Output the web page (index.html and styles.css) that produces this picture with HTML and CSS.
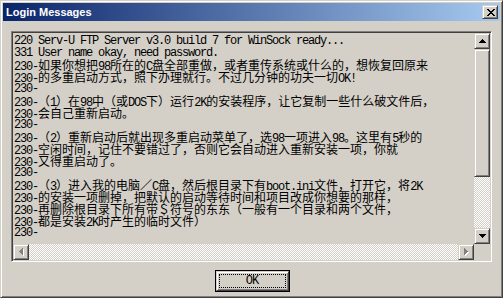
FILE: index.html
```
<!DOCTYPE html>
<html>
<head>
<meta charset="utf-8">
<link rel="stylesheet" href="styles.css">
</head>
<body>
<div class="win">
  <div class="title">
    <span class="title-text">Login Messages</span>
    <div class="close raised">
      <svg width="8" height="7" viewBox="0 0 8 7" shape-rendering="crispEdges">
        <path d="M0 0h2v1H0zM6 0h2v1H6zM1 1h2v1H1zM5 1h2v1H5zM2 2h4v1H2zM3 3h2v1H3zM2 4h4v1H2zM1 5h2v1H1zM5 5h2v1H5zM0 6h2v1H0zM6 6h2v1H6z" fill="#000"/>
      </svg>
    </div>
  </div>
  <div class="content">
    <div class="edit">
      <div class="text">
        <div class="ln">220 Serv-U FTP Server v3.0 build 7 for WinSock ready...</div>
        <div class="ln">331 User name okay, need password.</div>
        <div class="ln">230-<span class="c">如果你想把</span>98<span class="c">所在的</span>C<span class="c">盘全部重做，或者重传系统或什么的，想恢复回原来</span></div>
        <div class="ln">230-<span class="c">的多重启动方式，照下办理就行。不过几分钟的功夫一切</span>OK!</div>
        <div class="ln">230-</div>
        <div class="ln">230-<span class="c">（</span>1<span class="c">）在</span>98<span class="c">中（或</span>DOS<span class="c">下）运行</span>2K<span class="c">的安装程序，让它复制一些什么破文件后，</span></div>
        <div class="ln">230-<span class="c">会自己重新启动。</span></div>
        <div class="ln">230-</div>
        <div class="ln">230-<span class="c">（</span>2<span class="c">）重新启动后就出现多重启动菜单了，选</span>98<span class="c">一项进入</span>98<span class="c">。这里有</span>5<span class="c">秒的</span></div>
        <div class="ln">230-<span class="c">空闲时间，记住不要错过了，否则它会自动进入重新安装一项，你就</span></div>
        <div class="ln">230-<span class="c">又得重启动了。</span></div>
        <div class="ln">230-</div>
        <div class="ln">230-<span class="c">（</span>3<span class="c">）进入我的电脑／</span>C<span class="c">盘，然后根目录下有</span>boot.ini<span class="c">文件，打开它，将</span>2K</div>
        <div class="ln">230-<span class="c">的安装一项删掉，把默认的启动等待时间和项目改成你想要的那样，</span></div>
        <div class="ln">230-<span class="c">再删除根目录下所有带＄符号的东东（一般有一个目录和两个文件，</span></div>
        <div class="ln">230-<span class="c">都是安装</span>2K<span class="c">时产生的临时文件）</span></div>
        <div class="ln">230-</div>
      </div>
      <div class="vscroll">
        <div class="sbtn raised">
          <svg width="7" height="4" viewBox="0 0 7 4" shape-rendering="crispEdges"><path d="M3 0h1v1H3zM2 1h3v1H2zM1 2h5v1H1zM0 3h7v1H0z" fill="#000"/></svg>
        </div>
        <div class="thumb raised"></div>
        <div class="track"></div>
        <div class="sbtn raised">
          <svg width="7" height="4" viewBox="0 0 7 4" shape-rendering="crispEdges"><path d="M0 0h7v1H0zM1 1h5v1H1zM2 2h3v1H2zM3 3h1v1H3z" fill="#000"/></svg>
        </div>
      </div>
      <div class="hscroll">
        <div class="sbtn raised">
          <svg width="5" height="8" viewBox="0 0 5 8" shape-rendering="crispEdges"><path d="M4 1h1v1H4zM3 2h2v1H3zM2 3h3v1H2zM1 4h4v1H1zM2 5h3v1H2zM3 6h2v1H3zM4 7h1v1H4z" fill="#fff"/><path d="M3 0h1v1H3zM2 1h2v1H2zM1 2h3v1H1zM0 3h4v1H0zM1 4h3v1H1zM2 5h2v1H2zM3 6h1v1H3z" fill="#808080"/></svg>
        </div>
        <div class="track"></div>
        <div class="sbtn raised">
          <svg width="5" height="8" viewBox="0 0 5 8" shape-rendering="crispEdges"><path d="M1 1h1v1H1zM1 2h2v1H1zM1 3h3v1H1zM1 4h4v1H1zM1 5h3v1H1zM1 6h2v1H1zM1 7h1v1H1z" fill="#fff"/><path d="M0 0h1v1H0zM0 1h2v1H0zM0 2h3v1H0zM0 3h4v1H0zM0 4h3v1H0zM0 5h2v1H0zM0 6h1v1H0z" fill="#808080"/></svg>
        </div>
      </div>
      <div class="corner"></div>
    </div>
    <div class="btnrow">
      <div class="okbtn">
        <div class="okinner raised"><span class="focus">OK</span></div>
      </div>
    </div>
  </div>
</div>
</body>
</html>
```
FILE: styles.css
```
html, body {
  margin: 0;
  padding: 0;
  background: #d4d0c8;
}
.win {
  width: 503px;
  height: 298px;
  box-sizing: border-box;
  border: 1px solid;
  border-color: #d4d0c8 #404040 #404040 #d4d0c8;
  box-shadow: inset 1px 1px #fff, inset -1px -1px #808080;
  padding: 2px;
  background: #d4d0c8;
  display: flex;
  flex-direction: column;
}
.raised {
  box-sizing: border-box;
  border: 1px solid;
  border-color: #d4d0c8 #404040 #404040 #d4d0c8;
  box-shadow: inset 1px 1px #fff, inset -1px -1px #808080;
  background: #d4d0c8;
}
.title {
  height: 18px;
  flex: none;
  display: flex;
  align-items: center;
  justify-content: space-between;
  background: linear-gradient(to right, #0a246a, #a6caf0);
  padding: 0 2px 0 3px;
}
.title-text {
  color: #fff;
  font-family: "Liberation Sans", Arial, sans-serif;
  font-weight: bold;
  font-size: 11px;
  line-height: 18px;
}
.close {
  width: 16px;
  height: 14px;
  display: flex;
  align-items: center;
  justify-content: center;
  padding-left: 1px;
}
.close svg { display: block; }
.content {
  flex: 1;
  display: flex;
  flex-direction: column;
  padding: 10px 8px 0 8px;
}
.edit {
  height: 231px;
  box-sizing: border-box;
  border: 1px solid;
  border-color: #808080 #fff #fff #808080;
  box-shadow: inset 1px 1px #404040, inset -1px -1px #d4d0c8;
  padding: 1px;
  display: grid;
  grid-template-columns: 1fr 16px;
  grid-template-rows: 1fr 16px;
  min-height: 0;
}
.text {
  padding: 2px 0 0 1px;
  overflow: hidden;
  min-height: 0;
  font-family: "Liberation Mono", "Courier New", monospace;
  font-size: 12px;
  letter-spacing: -1.2px;
  color: #000;
}
.ln {
  height: 12px;
  line-height: 12px;
  white-space: pre;
}
.c {
  font-family: "Noto Sans CJK SC", sans-serif;
  font-size: 12px;
  line-height: 12px;
  letter-spacing: 0;
}
.vscroll {
  display: flex;
  flex-direction: column;
}
.sbtn {
  width: 16px;
  height: 16px;
  flex: none;
  display: flex;
  align-items: center;
  justify-content: center;
}
.sbtn svg { display: block; }
.thumb {
  height: 128px;
  flex: none;
}
.track {
  flex: 1;
  background: repeating-conic-gradient(#fff 0 25%, #d4d0c8 0 50%) 0 0 / 2px 2px;
}
.hscroll {
  display: flex;
}
.corner {
  background: #d4d0c8;
}
.btnrow {
  display: flex;
  justify-content: center;
  padding-top: 8px;
  padding-left: 1px;
}
.okbtn {
  width: 75px;
  height: 22px;
  box-sizing: border-box;
  border: 1px solid #000;
}
.okinner {
  width: 100%;
  height: 100%;
  display: flex;
  padding: 3px;
}
.focus {
  flex: 1;
  outline: 1px dotted #000;
  outline-offset: 0;
  display: flex;
  align-items: center;
  justify-content: center;
  font-family: "Liberation Mono", "Courier New", monospace;
  font-size: 12px;
  letter-spacing: -1px;
  color: #000;
}
```
